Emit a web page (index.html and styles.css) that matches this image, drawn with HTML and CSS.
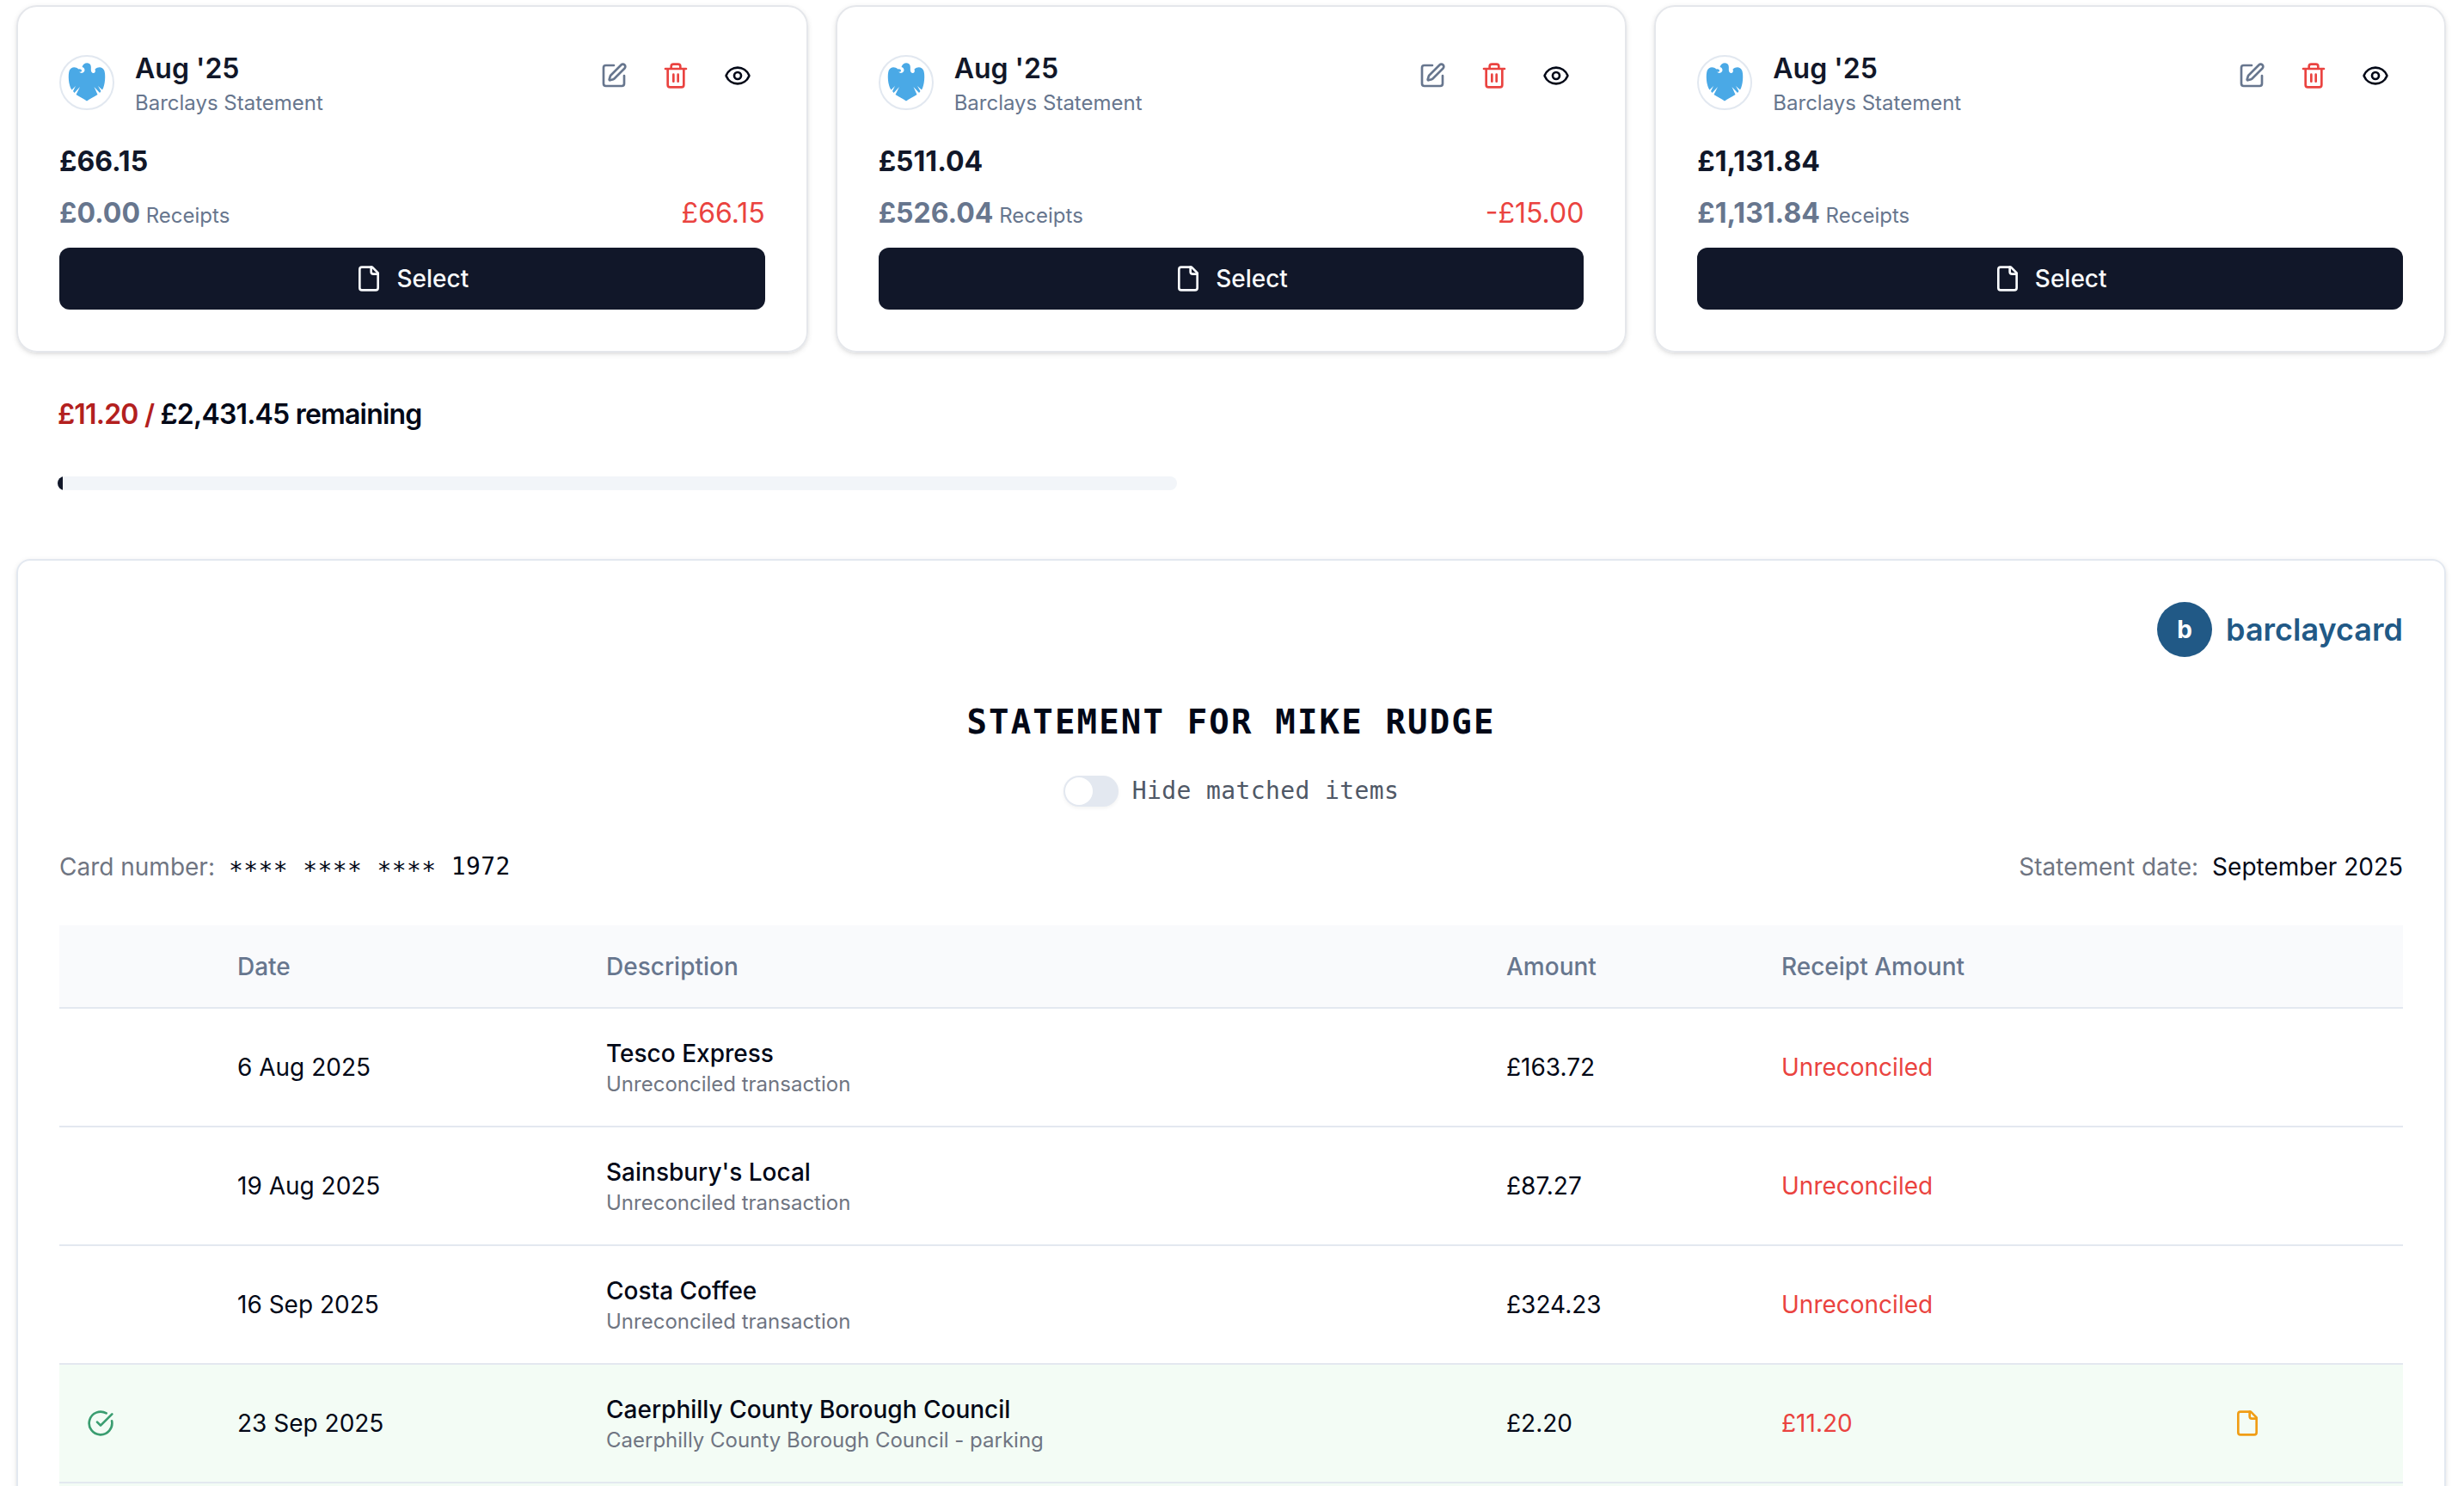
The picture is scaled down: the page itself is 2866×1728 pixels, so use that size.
FILE: index.html
```html
<!DOCTYPE html>
<html lang="en">
<head>
<meta charset="utf-8">
<title>Statements</title>
<link rel="stylesheet" href="styles.css">
</head>
<body>
<svg class="sprite" aria-hidden="true">
  <symbol id="pen" viewBox="0 0 24 24"><path d="M12 3H5a2 2 0 0 0-2 2v14a2 2 0 0 0 2 2h14a2 2 0 0 0 2-2v-7"/><path d="M18.375 2.625a1 1 0 0 1 3 3l-9.013 9.014a2 2 0 0 1-.853.505l-2.873.84a.5.5 0 0 1-.62-.62l.84-2.873a2 2 0 0 1 .506-.852z"/></symbol>
  <symbol id="trash" viewBox="0 0 24 24"><path d="M3 6h18M19 6v14a2 2 0 0 1-2 2H7a2 2 0 0 1-2-2V6M8 6V4a2 2 0 0 1 2-2h4a2 2 0 0 1 2 2v2M10 11v6M14 11v6"/></symbol>
  <symbol id="eye" viewBox="0 0 24 24"><path d="M2.062 12.348a1 1 0 0 1 0-.696 10.75 10.75 0 0 1 19.876 0 1 1 0 0 1 0 .696 10.75 10.75 0 0 1-19.876 0"/><circle cx="12" cy="12" r="3"/></symbol>
  <symbol id="file" viewBox="0 0 24 24"><path d="M15 2H6a2 2 0 0 0-2 2v16a2 2 0 0 0 2 2h12a2 2 0 0 0 2-2V7Z"/><path d="M14 2v4a2 2 0 0 0 2 2h4"/></symbol>
  <symbol id="check" viewBox="0 0 24 24"><path d="M21.801 10A10 10 0 1 1 17 3.335"/><path d="m9 11 3 3L22 4"/></symbol>
  <symbol id="eagle" viewBox="0 0 60 60">
    <path fill="#4aa9e6" d="M24.500 12C25.500 8.200 29.500 6.200 33 8C35 9.400 35 12 34.800 14.500C34.700 17.500 36 19.300 38.200 19C40 18.500 40.200 16.500 39.500 14.500C43 11 48.500 11.500 50.300 16C52 21 51.500 33 48 38.500L43 34L46.500 40L45 42L38.500 35L42.500 44C38 47 34 48.500 30 51.500C26 48.500 22 47 17.500 44L22 35L15.500 42L14 40L17 34L12.500 38.500C8.500 33 8 21 9.700 16C11.500 11.500 17 11 20.500 14.500C22.500 14 23.800 15 24 16C24.200 17.200 23 18 21.500 17.500C22 19 24 19.300 25.500 18.500C27.500 17.500 28 15.500 27 13.800C26.500 12.800 25.500 12.200 24.500 12Z"/>
  </symbol>
</svg>
<main class="page">
  <section class="cards">
    <article class="card">
      <header class="card-head">
        <span class="avatar"><svg><use href="#eagle"/></svg></span>
        <div class="card-title"><h3>Aug '25</h3><p>Barclays Statement</p></div>
        <div class="actions"><button class="edit"><svg class="icon"><use href="#pen"/></svg></button><button class="delete"><svg class="icon"><use href="#trash"/></svg></button><button><svg class="icon"><use href="#eye"/></svg></button></div>
      </header>
      <div class="total">£66.15</div>
      <div class="receipts"><span><b>£0.00</b><small> Receipts</small></span><span class="diff">£66.15</span></div>
      <button class="select"><svg class="icon"><use href="#file"/></svg>Select</button>
    </article>
    <article class="card">
      <header class="card-head">
        <span class="avatar"><svg><use href="#eagle"/></svg></span>
        <div class="card-title"><h3>Aug '25</h3><p>Barclays Statement</p></div>
        <div class="actions"><button class="edit"><svg class="icon"><use href="#pen"/></svg></button><button class="delete"><svg class="icon"><use href="#trash"/></svg></button><button><svg class="icon"><use href="#eye"/></svg></button></div>
      </header>
      <div class="total">£511.04</div>
      <div class="receipts"><span><b>£526.04</b><small> Receipts</small></span><span class="diff">-£15.00</span></div>
      <button class="select"><svg class="icon"><use href="#file"/></svg>Select</button>
    </article>
    <article class="card">
      <header class="card-head">
        <span class="avatar"><svg><use href="#eagle"/></svg></span>
        <div class="card-title"><h3>Aug '25</h3><p>Barclays Statement</p></div>
        <div class="actions"><button class="edit"><svg class="icon"><use href="#pen"/></svg></button><button class="delete"><svg class="icon"><use href="#trash"/></svg></button><button><svg class="icon"><use href="#eye"/></svg></button></div>
      </header>
      <div class="total">£1,131.84</div>
      <div class="receipts"><span><b>£1,131.84</b><small> Receipts</small></span></div>
      <button class="select"><svg class="icon"><use href="#file"/></svg>Select</button>
    </article>
  </section>

  <section class="remaining">
    <h2><span>£11.20 /</span> £2,431.45 remaining</h2>
    <div class="progress"><div class="progress-fill" style="width:0.46%"></div></div>
  </section>

  <section class="statement">
    <div class="brand"><span class="brand-mark">b</span><span class="brand-name">barclaycard</span></div>
    <h1>STATEMENT FOR MIKE RUDGE</h1>
    <label class="toggle"><span class="switch"><span class="thumb"></span></span><span class="toggle-text">Hide matched items</span></label>
    <div class="meta">
      <div class="meta-item"><span class="meta-label">Card number:</span><span class="digits"><span class="mask">**** **** ****</span> 1972</span></div>
      <div class="meta-item"><span class="meta-label">Statement date:</span><span>September 2025</span></div>
    </div>
    <div class="table">
      <div class="row head"><span></span><span>Date</span><span>Description</span><span>Amount</span><span>Receipt Amount</span><span></span></div>
      <div class="row"><span></span><span>6 Aug 2025</span><div><p>Tesco Express</p><small>Unreconciled transaction</small></div><span>£163.72</span><span class="red">Unreconciled</span><span></span></div>
      <div class="row"><span></span><span>19 Aug 2025</span><div><p>Sainsbury's Local</p><small>Unreconciled transaction</small></div><span>£87.27</span><span class="red">Unreconciled</span><span></span></div>
      <div class="row"><span></span><span>16 Sep 2025</span><div><p>Costa Coffee</p><small>Unreconciled transaction</small></div><span>£324.23</span><span class="red">Unreconciled</span><span></span></div>
      <div class="row matched"><span class="tick"><svg class="icon"><use href="#check"/></svg></span><span>23 Sep 2025</span><div><p>Caerphilly County Borough Council</p><small>Caerphilly County Borough Council - parking</small></div><span>£2.20</span><span class="red">£11.20</span><span class="note"><svg class="icon"><use href="#file"/></svg></span></div>
      <div class="row matched"></div>
    </div>
  </section>
</main>
</body>
</html>
```
FILE: styles.css
```css
* { box-sizing: border-box; margin: 0; padding: 0; }
body { background: #fff; color: #020817; font-family: Inter, "Liberation Sans", sans-serif; font-size: 28px; line-height: 40px; }
button { border: 0; background: none; font: inherit; color: inherit; }
.sprite { display: none; }
.icon { width: 32px; height: 32px; flex: none; fill: none; stroke: currentColor; stroke-width: 2; stroke-linecap: round; stroke-linejoin: round; }
.page { height: 1728px; overflow: hidden; padding: 6px 21px 0 19px; display: flex; flex-direction: column; }

.cards { flex: none; display: grid; grid-template-columns: repeat(3, 1fr); gap: 32px; }
.card { height: 404px; padding: 48px; border: 2px solid #e5e7eb; border-radius: 24px; box-shadow: 0 2px 6px rgba(0,0,0,.1), 0 2px 4px -2px rgba(0,0,0,.1); display: flex; flex-direction: column; color: #111729; }
.card-head { display: flex; height: 88px; }
.avatar { width: 64px; height: 64px; margin-top: 8px; border: 2px solid #e2e8f0; border-radius: 50%; overflow: hidden; }
.avatar svg { display: block; width: 60px; height: 60px; }
.card-title { margin-left: 24px; }
.card-title h3 { font-size: 32px; line-height: 48px; font-weight: 600; }
.card-title p { font-size: 24px; line-height: 32px; color: #67768e; }
.actions { margin-left: auto; display: flex; gap: 8px; color: #020817; }
.actions button { width: 64px; height: 64px; display: grid; place-items: center; }
.actions .edit { color: #67768e; }
.actions .delete { color: #ea4340; }
.total { margin-top: 16px; font-size: 32px; line-height: 56px; font-weight: 700; }
.receipts { margin-top: 4px; height: 56px; line-height: 56px; font-size: 32px; display: flex; justify-content: space-between; color: #67768e; }
.receipts small { font-size: 24px; }
.receipts .diff { color: #ea4340; }
.select { margin-top: auto; height: 72px; border-radius: 12px; background: #111729; color: #f8fafc; font-weight: 500; display: flex; align-items: center; justify-content: center; gap: 16px; }

.remaining { flex: none; height: 240px; padding: 48px; display: flex; flex-direction: column; }
.remaining h2 { font-size: 32px; line-height: 48px; font-weight: 600; letter-spacing: -0.8px; }
.remaining h2 span { color: #b3201e; }
.progress { margin-top: 48px; width: 1302px; height: 16px; border-radius: 8px; overflow: hidden; background: #f2f5f9; }
.progress-fill { height: 16px; background: #111729; }

.statement { flex: none; border: 2px solid #e3e8f0; border-radius: 16px; box-shadow: 0 2px 6px rgba(0,0,0,.1), 0 2px 4px -2px rgba(0,0,0,.1); padding: 48px; }
.brand { display: flex; justify-content: flex-end; align-items: center; gap: 16px; color: #215986; font-size: 36px; font-weight: 600; }
.brand-mark { width: 64px; height: 64px; border-radius: 50%; background: #215986; color: #fff; font-size: 28px; font-weight: 700; display: grid; place-items: center; }
h1 { margin-top: 48px; text-align: center; font: 700 39px/56px "DejaVu Sans Mono", monospace; letter-spacing: 2.15px; }
.toggle { margin-top: 32px; height: 40px; display: flex; justify-content: center; align-items: center; gap: 16px; }
.switch { width: 64px; height: 36px; padding: 2px; border-radius: 18px; background: #e3e8f0; box-shadow: 0 2px 4px rgba(0,0,0,.05); }
.thumb { display: block; width: 32px; height: 32px; border-radius: 50%; background: #fff; }
.toggle-text { font: 28px/40px "DejaVu Sans Mono", monospace; letter-spacing: .39px; color: #4f5866; }
.meta { margin-top: 48px; display: flex; justify-content: space-between; }
.meta-item { display: flex; gap: 16px; }
.meta-label { color: #6f7582; }
.digits { height: 40px; font: 28px/40px "DejaVu Sans Mono", monospace; letter-spacing: .39px; }
.mask { position: relative; top: 5px; }
.table { margin-top: 48px; }
.row { height: 138px; display: grid; grid-template-columns: 175px 429px 1047px 320px 526px 1fr; align-items: center; border-bottom: 2px solid #e3e8f0; }
.row > * { padding: 0 32px; }
.row p { font-weight: 500; line-height: 40px; }
.row small { display: block; font-size: 24px; line-height: 32px; color: #6f7582; }
.head { height: 97px; background: #f9fafc; color: #67768e; font-weight: 500; }
.matched { background: #f3fcf5; }
.red { color: #ea4340; }
.tick, .note { display: flex; color: #3a9d70; }
.note { color: #f09d15; }
```
